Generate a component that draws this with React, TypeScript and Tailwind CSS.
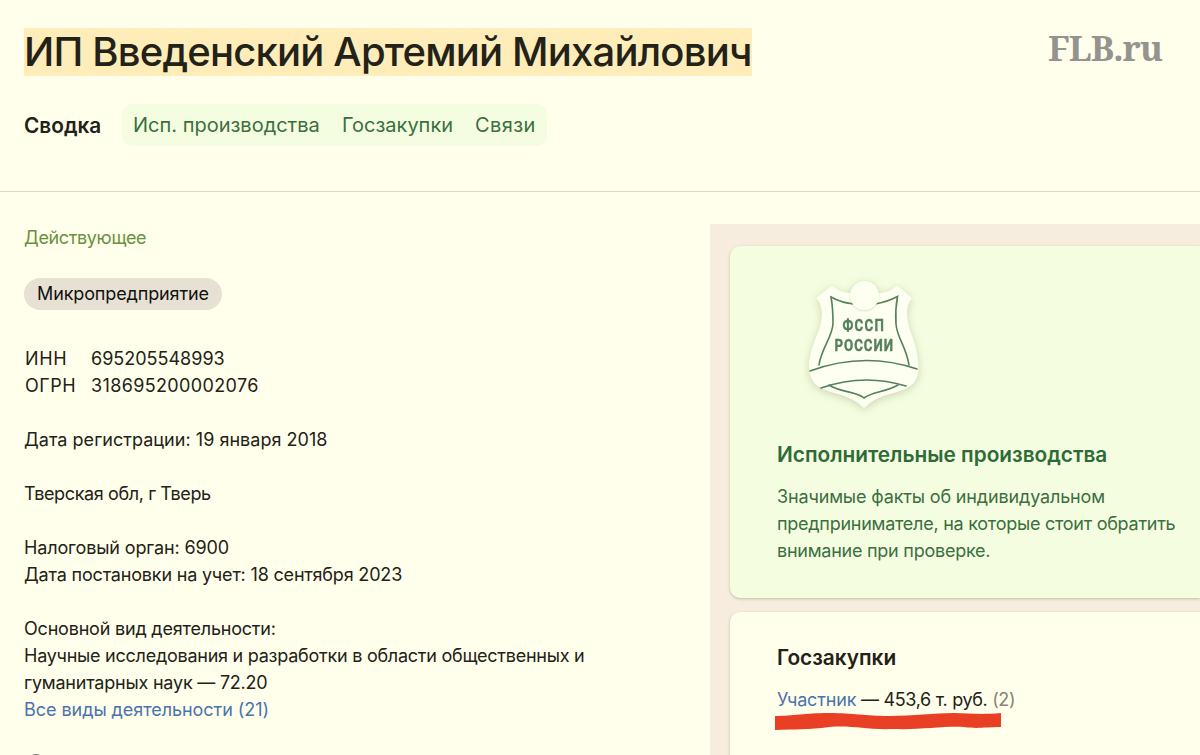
import React from 'react';

const tabs = [
  { label: 'Исп. производства', style: 'w-[187px]' },
  { label: 'Госзакупки', style: 'w-[111px]' },
  { label: 'Связи', style: 'w-[61px] tracking-[0.4px]' },
];

const BailiffBadge: React.FC = () => (
  <svg width="120" height="140" viewBox="0 0 120 140" className="drop-shadow-[0_2px_4px_rgba(90,120,50,0.28)]">
    <path
      d="M16 20 L30 9 Q32 8 34 9 Q41 15 51 15 L79 15 Q88 15 95 9 Q97 8 99 9 L112 20 C106 27 106 37 109 49 C113 60 118 73 118.500 88 C119 103 112 110 97 114 Q75 119 64 130 Q53 119 31 114 C16 110 9 103 9 88 C9.500 73 16 60 20 49 C23 37 23 27 16 20 Z"
      fill="#fdfff0"
    />
    <g fill="none" stroke="#56805c" strokeWidth="1.6" strokeLinecap="round">
      <path d="M19 87 C21 71 33 58 33 45 Q33 30 31 19 Q42 25 54 26" />
      <path d="M75 26 Q87 24 97.500 18.500 Q95 32 96 46 C97 60 106 68 109 87" />
      <path d="M10 93 Q64 73 117 91" />
      <path d="M21 110 Q64 95 106 108" />
      <path d="M29 107 C42 115 56 113 64 120 C72 114 86 114 98 107" />
    </g>
    <circle cx="64.5" cy="17.5" r="14.5" fill="#fdfff0" className="drop-shadow-[0_1px_1px_rgba(90,120,50,0.2)]" />
    <g fill="#56805c" stroke="#56805c" strokeWidth="0.4" fontFamily="Roboto, sans-serif" fontWeight="700" fontSize="17">
      <text transform="translate(42.500 53) scale(0.78 1)" textLength="53" lengthAdjust="spacing">ФССП</text>
      <text transform="translate(34.500 73) scale(0.78 1)" textLength="75" lengthAdjust="spacing">РОССИИ</text>
    </g>
  </svg>
);

const App: React.FC = () => {
  return (
    <div className="flex h-[755px] w-[1200px] flex-col overflow-hidden bg-[#ffffeb] font-[Inter,sans-serif] text-[18px] leading-[27px] text-[#222218]">
      <header className="h-48 shrink-0 border-b border-[#d9d8cb] px-6 pt-7">
        <div className="flex items-start justify-between">
          <h1 className="h-12 w-[728px] whitespace-nowrap bg-[#feecb9] text-[40px] leading-[48px] font-medium tracking-[-0.8px]">
            ИП Введенский Артемий Михайлович
          </h1>
          <div className="mr-[13px] h-10 w-[115px] whitespace-nowrap font-['Noto_Serif','Liberation_Serif',serif] text-[35px] leading-10 font-bold tracking-[-1px] text-[#939390]">FLB.ru</div>
        </div>
        <nav className="mt-7 flex items-center text-[20px]">
          <span className="w-[98px] text-[20.8px] font-semibold">Сводка</span>
          <div className="flex h-[42px] w-[425px] items-center gap-[22px] rounded-[10px] bg-[#f5fde0] px-[11px] text-[#3b6f40]">
            {tabs.map((tab) => (
              <a key={tab.label} className={`whitespace-nowrap ${tab.style}`}>{tab.label}</a>
            ))}
          </div>
        </nav>
      </header>

      <div className="flex min-h-0 flex-1">
        <main className="w-[710px] shrink-0 overflow-hidden pt-8 pl-6 whitespace-nowrap">
          <p className="tracking-[-0.36px] text-[#6b9040]">Действующее</p>
          <div className="mt-[27px] mb-[35px] h-8 w-[198px] rounded-full bg-[#e7e1d3] px-[13px] leading-8 tracking-[-0.13px] text-[#111]">
            Микропредприятие
          </div>
          <dl className="grid grid-cols-[66px_auto] pl-px">
            <dt className="tracking-[0.6px]">ИНН</dt>
            <dd>695205548993</dd>
            <dt className="tracking-[0.5px]">ОГРН</dt>
            <dd className="tracking-[0.36px]">318695200002076</dd>
          </dl>
          <p className="mt-[27px] tracking-[0.03px]">Дата регистрации: 19 января 2018</p>
          <p className="mt-[27px] tracking-[-0.38px]">Тверская обл, г Тверь</p>
          <p className="mt-[27px] tracking-[-0.13px]">Налоговый орган: 6900</p>
          <p className="tracking-[-0.18px]">Дата постановки на учет: 18 сентября 2023</p>
          <p className="mt-[27px] tracking-[-0.2px]">Основной вид деятельности:</p>
          <p className="tracking-[-0.25px]">Научные исследования и разработки в области общественных и</p>
          <p className="tracking-[-0.22px]">гуманитарных наук — 72.20</p>
          <a className="block tracking-[-0.05px] text-[#4a73ab]">Все виды деятельности (21)</a>
          {/* next row, cut off by the bottom edge */}
          <div className="mt-[31px] ml-1 size-4 rounded-full border-2 border-[#77776b]" />
        </main>

        <aside className="mt-8 flex-1 overflow-hidden bg-[#f6eddf] pt-[22px] pl-5 whitespace-nowrap">
          <section className="h-[352px] rounded-l-[10px] bg-[#f5fde0] pt-8 pl-[47px] text-[#3b6f40] shadow-[0_1px_3px_rgba(80,70,40,0.3)]">
            <div className="ml-[23px] h-[163px]">
              <BailiffBadge />
            </div>
            <h2 className="text-[20.8px] leading-7 font-semibold text-[#2f6b38]">Исполнительные производства</h2>
            <div className="mt-[14px]">
              <p className="tracking-[-0.15px]">Значимые факты об индивидуальном</p>
              <p className="tracking-[-0.26px]">предпринимателе, на которые стоит обратить</p>
              <p className="tracking-[-0.25px]">внимание при проверке.</p>
            </div>
          </section>
          <section className="mt-[14px] h-40 rounded-l-[10px] bg-[#ffffeb] pt-8 pl-[47px] shadow-[0_1px_3px_rgba(80,70,40,0.3)]">
            <h2 className="text-[20.8px] leading-7 font-semibold">Госзакупки</h2>
            <p className="mt-[14px] tracking-[-0.34px]">
              <a className="tracking-[-0.15px] text-[#4a73ab]">Участник</a> — 453,6 т. руб. <span className="text-[#85857a]">(2)</span>
            </p>
            <svg width="228" height="20" viewBox="0 0 228 20" className="-ml-[3px]">
              <path d="M1 3 C20 3 30 0 55 0 C80 0 90 3 115 3 C140 3 160 0 180 0 C195 0 205 2 227 0 V14 C210 14 205 16 190 14 C170 13 145 17 120 16 C90 17 80 12 55 14 C35 17 20 16 1 17 Z" fill="#e93f25" />
            </svg>
          </section>
        </aside>
      </div>
    </div>
  );
};

export default App;
